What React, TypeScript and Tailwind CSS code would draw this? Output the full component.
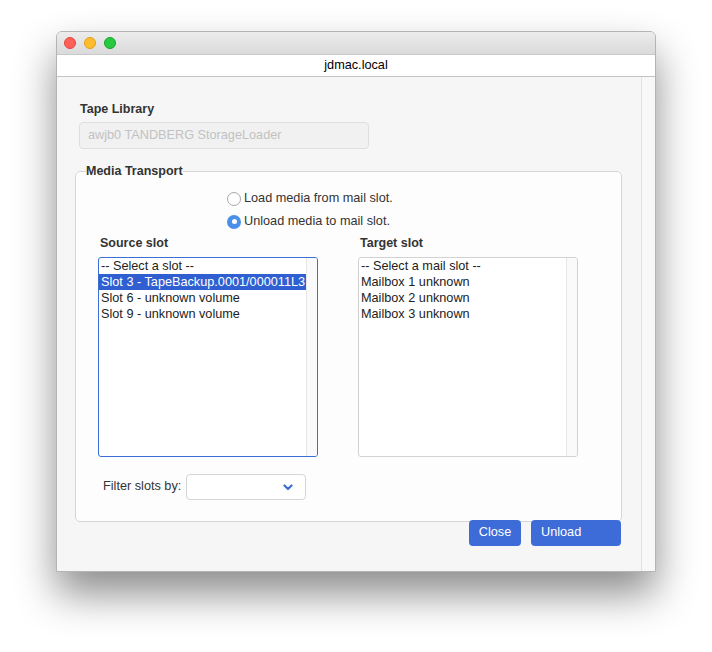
import React, { useState } from 'react';

const sourceSlots = [
  '-- Select a slot --',
  'Slot 3 - TapeBackup.0001/000011L3',
  'Slot 6 - unknown volume',
  'Slot 9 - unknown volume',
];

const targetSlots = ['-- Select a mail slot --', 'Mailbox 1 unknown', 'Mailbox 2 unknown', 'Mailbox 3 unknown'];

// Plain listbox imitation with a fake scrollbar gutter
const ListBox: React.FC<{
  items: string[];
  selected: number | null;
  focused?: boolean;
  onSelect: (i: number) => void;
}> = ({ items, selected, focused, onSelect }) => (
  <div
    className={`flex h-[200px] w-[220px] overflow-hidden rounded-[3px] border bg-white ${
      focused ? 'border-[#3b6fd6]' : 'border-[#d2d2d2]'
    }`}
  >
    <div className="flex-1 overflow-hidden">
      {items.map((item, i) => (
        <div
          key={item}
          onClick={() => onSelect(i)}
          className={`h-4 cursor-default overflow-hidden whitespace-nowrap pl-[2px] text-[12.7px] leading-4 ${
            selected === i ? 'bg-[#2f5fd0] text-white' : 'text-[#222]'
          }`}
        >
          {item}
        </div>
      ))}
    </div>
    <div className="w-[11px] border-l border-[#e6e6e6] bg-[#fafafa]" />
  </div>
);

const Radio: React.FC<{ checked: boolean; label: string; onClick: () => void }> = ({ checked, label, onClick }) => (
  <div className="flex h-[23px] cursor-default items-center" onClick={onClick}>
    {checked ? (
      <span className="flex h-[14px] w-[14px] items-center justify-center rounded-full bg-[#4a8fe8]">
        <span className="h-[5px] w-[5px] rounded-full bg-white" />
      </span>
    ) : (
      <span className="h-[14px] w-[14px] rounded-full border border-[#a9a9a9] bg-white" />
    )}
    <span className="ml-[3px] text-[12.7px] text-[#333]">{label}</span>
  </div>
);

const App: React.FC = () => {
  const [mode, setMode] = useState<'load' | 'unload'>('unload');
  const [source, setSource] = useState<number | null>(1);
  const [target, setTarget] = useState<number | null>(null);

  return (
    <div className="min-h-[652px] bg-white pl-[56px] pt-[31px]" style={{ fontFamily: '"Liberation Sans", Arial, sans-serif' }}>
      <div className="flex h-[541px] w-[600px] flex-col overflow-hidden rounded-t-[6px] border border-[#b4b4b4] bg-[#f6f6f6] shadow-[0_22px_40px_rgba(0,0,0,0.45)]">
        {/* title bar */}
        <div className="flex h-[23px] items-center gap-[8px] border-b border-[#c9c9c9] bg-gradient-to-b from-[#ececec] to-[#dadada] pl-[7px]">
          <span className="h-[12px] w-[12px] rounded-full border border-[#e2463f] bg-[#fe5f57]" />
          <span className="h-[12px] w-[12px] rounded-full border border-[#e1a116] bg-[#febc2e]" />
          <span className="h-[12px] w-[12px] rounded-full border border-[#13a42b] bg-[#28c840]" />
        </div>
        <div className="flex h-[22px] items-center justify-center border-b border-[#c4c4c4] bg-white text-[12.7px] text-black">
          jdmac.local
        </div>

        <div className="flex flex-1">
          <div className="flex w-[584px] flex-col pl-[18px] pt-[24px]">
            <div className="ml-[5px] text-[12.5px] font-bold leading-4 text-[#333]">Tape Library</div>
            <div className="ml-[4px] mt-[5px] flex h-[27px] w-[290px] items-center rounded-[4px] border border-[#dedede] bg-[#f1f1f1] pl-[8px] text-[12.7px] text-[#c2c2c2]">
              awjb0 TANDBERG StorageLoader
            </div>

            <fieldset className="mt-[14px] w-[547px] rounded-[5px] border border-[#d6d6d6] bg-[#fdfdfd]">
              <legend className="ml-[10px] text-[12.5px] font-bold leading-4 text-[#333]">Media Transport</legend>
              <div className="pb-[21px] pl-[22px] pt-[8px]">
                <div className="ml-[129px]">
                  <Radio checked={mode === 'load'} label="Load media from mail slot." onClick={() => setMode('load')} />
                  <Radio checked={mode === 'unload'} label="Unload media to mail slot." onClick={() => setMode('unload')} />
                </div>
                <div className="mt-[2px] flex gap-[40px]">
                  <div>
                    <div className="ml-[2px] text-[12.5px] font-bold leading-4 text-[#333]">Source slot</div>
                    <div className="mt-[6px]">
                      <ListBox items={sourceSlots} selected={source} focused onSelect={setSource} />
                    </div>
                  </div>
                  <div>
                    <div className="ml-[2px] text-[12.5px] font-bold leading-4 text-[#333]">Target slot</div>
                    <div className="mt-[6px]">
                      <ListBox items={targetSlots} selected={target} onSelect={setTarget} />
                    </div>
                  </div>
                </div>
                <div className="mt-[17px] flex items-center">
                  <span className="ml-[5px] text-[12.7px] text-[#333]">Filter slots by:</span>
                  <div className="ml-[5px] flex h-[26px] w-[120px] items-center justify-end rounded-[4px] border border-[#d5d5d5] bg-white pr-[12px]">
                    <svg width="10" height="7" viewBox="0 0 10 7">
                      <polyline points="1.5,1.5 5,5 8.5,1.5" fill="none" stroke="#3f6ad8" strokeWidth="2.2" strokeLinecap="round" strokeLinejoin="round" />
                    </svg>
                  </div>
                </div>
              </div>
            </fieldset>

            <div className="-mt-[2px] mr-[20px] flex justify-end gap-[10px]">
              <button className="h-[26px] w-[52px] rounded-[4px] bg-[#3d6bd8] text-[12.7px] text-white">Close</button>
              <button className="h-[26px] w-[90px] rounded-[4px] bg-[#3d6bd8] pl-[10px] text-left text-[12.7px] text-white">
                {mode === 'unload' ? 'Unload' : 'Load'}
              </button>
            </div>
          </div>
          {/* scroll pane gutter */}
          <div className="flex-1 border-l border-[#e2e2e2] bg-[#f8f8f8]" />
        </div>
      </div>
    </div>
  );
};

export default App;
